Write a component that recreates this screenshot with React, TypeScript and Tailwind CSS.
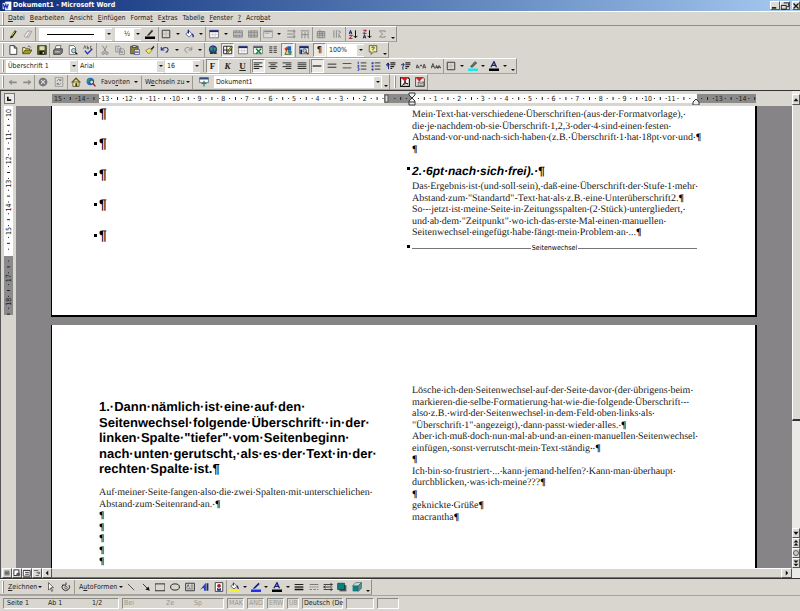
import type { ReactNode } from "react";
import clsx from "clsx";

const NAVY = "#15217a";
const GRAY = "#868686";

/* Toolbar glyphs, all drawn on a 16 x 16 grid */
const icons: Record<string, ReactNode> = {
    pencil: <><path d="M4 12 11 2l3 2-7 10-4 1z" fill="#222" /><path d="m6 11 5-7" stroke="#e8e03a" strokeWidth="1.5" /></>,
    eraser: <path d="m2 11 6-8 6 1-5 9H4zM6 13l5-8" stroke="#777" fill="#eee" />,
    penColor: <><path d="m4 9 7-8 2 2-6 7-4 1z" fill="#333" /><path d="M0 12h16v4H0z" fill="#000" /></>,
    borders: <><path d="M2 2h12v12H2z" stroke="#333" fill="none" strokeWidth="1.5" /><path d="M8 3v10M3 8h10" stroke="#888" strokeDasharray="1 1" /></>,
    bucket: <><path d="m3 8 5-5 5 5-5 5z" fill="#fff" stroke={NAVY} /><path d="M7 1v6M13 8c2 2 2 4 1 5" stroke={NAVY} strokeWidth="2" fill="none" /></>,
    table: <><path d="M1 2h14v12H1z" fill="#fff" stroke="#444" /><path d="M1 2h14v3H1z" fill={NAVY} /><path d="M2 9h12M6 5v9M10 5v9" stroke="#bbb" /></>,
    merge: <><path d="M1 3h14v10H1zM1 6h14M1 10h14M5 3v3M10 3v3M5 10v3M10 10v3" stroke={GRAY} strokeWidth="1.5" fill="#ccc" /></>,
    split: <><path d="M1 3h14v10H1zM1 6h14M1 10h14M5 3v10M10 3v10" stroke={GRAY} strokeWidth="1.5" fill="#ccc" /></>,
    cellAlign: <><path d="M1 2h14v12H1z" stroke={GRAY} fill="#ddd" /><path d="M2 3h12v2H2zM3 7h7v1H3z" fill={GRAY} /></>,
    rowsEven: <path d="M2 3h9M2 8h9M2 13h9M13 1v14M11 5l2-3 2 3M11 11l2 3 2-3" stroke={GRAY} strokeWidth="1.5" fill="none" />,
    colsEven: <path d="M3 5v10M8 5v10M13 5v10M1 3h14M3 9h10" stroke={GRAY} strokeWidth="1.5" fill="none" />,
    autoFormat: <path d="M2 4h12v10H2zM2 7h12M2 10h12M6 4v10M10 4v10M5 1l6 6" stroke={GRAY} strokeWidth="1.5" fill="#ccc" />,
    textDir: <path d="M3 2v12M7 2v12M11 9v5M9 2l5 3-4 3M11 9l3 5" stroke={GRAY} strokeWidth="1.5" fill="none" />,
    sortAZ: <><path d="m2 8 2-6 2 6M3 6h3" stroke={NAVY} strokeWidth="1.6" fill="none" /><path d="M2 10h5l-5 5h5" stroke="#9b1c2c" strokeWidth="1.6" fill="none" /><path d="M12 2v12M9 11l3 3 3-3" stroke="#111" strokeWidth="1.6" fill="none" /></>,
    sortZA: <><path d="M2 2h5L2 7h5" stroke="#9b1c2c" strokeWidth="1.6" fill="none" /><path d="m2 15 2-6 2 6M3 13h3" stroke={NAVY} strokeWidth="1.6" fill="none" /><path d="M12 2v12M9 11l3 3 3-3" stroke="#111" strokeWidth="1.6" fill="none" /></>,
    sigma: <path d="M13 5V3H4l5 5-5 5h9v-2" stroke={GRAY} strokeWidth="1.5" fill="none" />,
    newDoc: <path d="M3 1h7l4 4v10H3zM10 1v4h4" fill="#fff" stroke="#222" strokeWidth="1.3" />,
    open: <><path d="M1 13V4h4l1 2h6v3" fill="#f5ee6a" stroke="#222" /><path d="m1 14 4-6h11l-4 6z" fill="#a89a18" stroke="#222" /><path d="M9 3c2-2 4-1 5 1" stroke="#222" fill="none" /></>,
    save: <><path d="M1 1h14v14H1z" fill="#5d6418" stroke="#111" /><path d="M4 2h8v6H4z" fill="#d8d8d0" /><path d="M4 10h8v5H4z" fill="#111" /><path d="M9 11h2v3H9z" fill="#eee" /></>,
    print: <><path d="M5 1h8l-2 6H3z" fill="#fff" stroke="#333" /><path d="m1 8 3-2h11v6l-3 3H1z" fill="#777" stroke="#222" /><path d="M3 11h8" stroke="#ddd" strokeWidth="1.5" /></>,
    preview: <><path d="M2 1h7l3 3v11H2z" fill="#fff" stroke="#333" /><circle cx="9" cy="9" r="3.5" fill="#9ed8e0" stroke="#333" /><path d="m12 12 3 3" stroke="#111" strokeWidth="2" /></>,
    spell: <><path d="m1 6 2-5 2 5M7 1v5h2V4H7M14 2h-2v4h2" stroke="#333" fill="none" /><path d="m3 9 4 5 8-8" stroke="#2038b0" strokeWidth="2" fill="none" /></>,
    cut: <><path d="m4 1 6 10M11 1 6 11" stroke={GRAY} strokeWidth="1.5" /><circle cx="5" cy="13" r="2" stroke={GRAY} fill="none" strokeWidth="1.5" /><circle cx="11" cy="13" r="2" stroke={GRAY} fill="none" strokeWidth="1.5" /></>,
    copy: <path d="M1 2h6l2 2v7H1zM7 6h5l3 2v7H7zM3 5h3M3 8h3M9 10h4M9 12h4" fill="#ddd" stroke={GRAY} strokeWidth="1.3" />,
    paste: <><path d="M1 2h12v12H1z" fill="#8d8428" stroke="#222" /><path d="M4 1h6v3H4z" fill="#ddd" stroke="#222" /><path d="M7 7h8v8H7z" fill="#fff" stroke={NAVY} /><path d="M8 10h6M8 12h6" stroke={NAVY} /></>,
    brush: <><path d="m1 9 6-4 4 4-5 5z" fill="#f2e85a" stroke="#555" /><path d="m9 6 5-5 1 2-4 5z" fill="#222" /></>,
    undo: <path d="M2 3v5h5M3 7c3-4 9-4 10 0 0 3-1 4-4 5" stroke="#2b3790" strokeWidth="1.8" fill="none" />,
    redo: <path d="M14 3v5H9M13 7C10 3 4 3 3 7c0 3 1 4 4 5" stroke={GRAY} strokeWidth="1.5" fill="none" />,
    link: <><circle cx="8" cy="7" r="6" fill="#1f4fb0" stroke="#123" /><path d="M4 4c3-2 4 1 3 3S4 9 4 7zM9 3l4 3-3 3z" fill="#36a24a" /><path d="M3 13h5M9 13h5" stroke="#333" strokeWidth="3" /></>,
    tablesBar: <><path d="M1 2h13v12H1zM1 8h13M6 2v12" fill="#fff" stroke="#222" strokeWidth="1.5" /><path d="m7 11 6-9 2 1-6 9z" fill="#e8e03a" stroke="#111" /></>,
    excel: <><path d="M1 2h14v12H1z" fill="#fff" stroke="#444" /><path d="M1 2h14v3H1z" fill="#557" /><path d="m5 6 8 8M13 6l-8 8" stroke="#178040" strokeWidth="2.5" /></>,
    columns: <path d="M2 3h5M2 6h5M2 9h5M2 12h5M9 3h5M9 6h5M9 9h5M9 12h5" stroke="#555" strokeWidth="1.8" />,
    drawing: <><path d="m2 6 5-4 3 3-5 5z" fill="#e3352b" /><path d="M8 2h5v6H8z" fill="#1b5fc0" /><path d="m3 15 4-9 6 9z" fill="#f1dc31" stroke="#223" /><circle cx="11" cy="11" r="3" fill="#1c8f93" /></>,
    docMap: <><path d="M1 2h14v12H1z" fill="#fff" stroke="#222" /><path d="M1 2h14v3H1zM2 7h3v7H2z" fill={NAVY} /><circle cx="9" cy="9" r="3" fill="#9ed8e0" stroke="#222" /><path d="m11 11 4 4" stroke="#8a1c1c" strokeWidth="2" /></>,
    help: <><path d="M2 1h12v10H9l-4 4v-4H2z" fill="#f7f08c" stroke="#222" /><path d="M6 5c0-3 5-2 4 0L8 7v1M8 9v1" stroke="#16309a" strokeWidth="1.5" fill="none" /></>,
    alignLeft: <path d="M1 3h14M1 6h9M1 9h14M1 12h9" stroke="#222" strokeWidth="1.6" />,
    alignCenter: <path d="M1 3h14M4 6h8M1 9h14M4 12h8" stroke="#333" strokeWidth="1.6" />,
    alignRight: <path d="M1 3h14M6 6h9M1 9h14M6 12h9" stroke="#333" strokeWidth="1.6" />,
    justify: <path d="M1 3h14M1 6h14M1 9h14M1 12h14" stroke="#333" strokeWidth="1.6" />,
    space1: <path d="M1 8h14" stroke="#222" strokeWidth="2" />,
    space15: <path d="M1 5h14M1 10h14" stroke="#333" strokeWidth="1.6" />,
    space2: <path d="M1 4h14M1 11h14" stroke="#444" strokeWidth="1.4" />,
    numbered: <><path d="M6 3h9M6 8h9M6 13h9" stroke="#333" strokeWidth="1.5" /><path d="M2 1v4M1 7h2v2H1M1 11h2v4H1" stroke="#2038b0" strokeWidth="1.5" fill="none" /></>,
    bullets: <><path d="M6 3h9M6 8h9M6 13h9" stroke="#333" strokeWidth="1.5" /><path d="M1 2h3v3H1zM1 7h3v3H1zM1 12h3v3H1z" fill="#2038b0" /></>,
    outdent: <><path d="M7 3h8M7 6h8M7 9h6M7 12h3" stroke="#222" strokeWidth="1.7" /><path d="M1 6h5M3 3 1 6l2 3M4 3v10" stroke={NAVY} strokeWidth="1.5" fill="none" /></>,
    indent: <><path d="M7 3h8M7 6h8M7 9h6M7 12h3" stroke="#222" strokeWidth="1.7" /><path d="M0 6h5M3 3l2 3-2 3M3 9v5" stroke={NAVY} strokeWidth="1.5" fill="none" /></>,
    grow: <path d="m0 12 2-6 3 6M1 10h3M6 9l2-3 2 3M11 12l2-7 3 7M12 10h3" stroke="#333" strokeWidth="1.3" fill="none" />,
    shrink: <path d="m0 12 3-8 3 8M1 9h4M7 12l2-5 2 5M11 12l2-5 3 5M8 10h7" stroke="#333" strokeWidth="1.3" fill="none" />,
    marker: <><path d="m4 9 7-8 3 2-7 7z" fill="#5b7d58" stroke="#234" /><path d="M0 12h16v4H0z" fill="#18e8e8" /></>,
    fontColor: <><path d="m3 10 5-9 4 9M5 7h6" stroke={NAVY} strokeWidth="2" fill="none" /><path d="M0 12h16v4H0z" fill="#000" /></>,
    back: <path d="M1 8l5-4v3h8v3H6v3z" fill="#8c8c8c" />,
    forward: <path d="m15 8-5-4v3H2v3h8v3z" fill="#8c8c8c" />,
    stop: <><circle cx="8" cy="8" r="7" fill="#777" /><path d="m5 5 6 6M11 5l-6 6" stroke="#ddd" strokeWidth="1.8" /></>,
    refresh: <><path d="M2 1h12v14H2z" fill="#e4e3df" stroke="#777" /><path d="M5 7c0-4 5-4 6-1M11 9c0 4-5 4-6 1M11 3v3H8M5 13v-3h3" stroke="#777" strokeWidth="1.5" fill="none" /></>,
    home: <><path d="M3 8h10v7H3z" fill="#fff27a" stroke="#222" /><path d="m1 9 7-7 7 7" stroke="#6b5a12" strokeWidth="2" fill="none" /><path d="M7 10h3v5H7z" fill="#333" /></>,
    search: <><circle cx="7" cy="7" r="6" fill="#2668c8" /><path d="M3 3c4-2 4 2 3 4s-4 2-4 0zM9 2l4 5H9z" fill="#2aa05a" /><circle cx="9" cy="8" r="3" fill="#bdf0f4" stroke="#123" /><path d="m11 10 4 5" stroke="#b52222" strokeWidth="2.5" /></>,
    webBar: <><path d="M1 1h14v8H1z" fill="#fff" stroke="#444" /><path d="M1 1h14v3H1z" fill="#334a80" /><path d="M8 6v9M4 10h8" stroke="#128a8a" strokeWidth="2" /></>,
    pdf: <><path d="M1 1h12l2 2v12H1z" fill="#fff" stroke="#111" strokeWidth="1.8" /><path d="M0 0h14L8 7z" fill="#e01b1b" /><path d="M4 13c3-2 4-5 4-7 0 3 2 5 5 5-4-1-6 0-9 2" stroke="#111" fill="none" strokeWidth="1.5" /></>,
    pdfMail: <><path d="M1 1h12l2 2v12H1z" fill="#eee" stroke="#444" strokeWidth="1.5" /><path d="M0 0h14L7 7z" fill="#e01b1b" /><path d="M5 8h9v6H5zM5 8l5 3 4-3" stroke="#444" fill="#ccc" /></>,
    pointer: <path d="m4 1 8 8H8l3 5-2 1-2-5-3 3z" fill="#fff" stroke="#222" />,
    rotate: <><path d="M3 4a6 6 0 1 0 10 1M8 1v4h-5" stroke="#333" strokeWidth="1.6" fill="none" /><circle cx="8" cy="9" r="2" fill="none" stroke="#333" /></>,
    line: <path d="m3 3 10 10" stroke="#333" strokeWidth="1.3" />,
    arrow: <><path d="m3 3 8 8" stroke="#222" strokeWidth="1.4" /><path d="m14 14-7-2 5-5z" fill="#111" /></>,
    rect: <path d="M0 3h16v11H0z" stroke="#222" strokeWidth="1.5" fill="none" />,
    ellipse: <ellipse cx="8" cy="8" rx="7" ry="5" stroke="#222" strokeWidth="1.5" fill="none" />,
    textBox: <><path d="M1 2h14v12H1z" fill="#ddd" stroke="#333" strokeWidth="1.5" /><path d="m3 9 2-5 2 5M9 5h4M9 8h4M3 11h10" stroke="#333" fill="none" /></>,
    wordArt: <><path d="M1 13 11 1v13H8v-4H5z" fill="#2345bd" /><path d="M12 2h3v12h-3z" fill="#1b2a70" /></>,
    clipArt: <><path d="M2 1h12v14H2z" fill="#fff" stroke="#222" strokeWidth="1.3" /><circle cx="8" cy="6" r="3" fill="#a3201c" /><path d="M5 14V9l3 2 3-2v5z" fill="#222a6a" /></>,
    fillColor: <><path d="m3 7 5-5 5 5-5 4z" fill="#fff" stroke="#223" /><path d="M7 1v5" stroke="#223" strokeWidth="1.5" /><path d="m13 6 2 5" stroke={NAVY} strokeWidth="2" /><path d="M0 12h16v4H0z" fill="#f5f518" /></>,
    lineColor: <><path d="m4 9 8-8 2 2-7 7-4 1z" fill={NAVY} /><path d="M0 12h16v4H0z" fill="#2030f0" /></>,
    lineStyle: <><path d="M1 4h14" stroke="#111" strokeWidth="1.5" /><path d="M1 8h14" stroke="#111" strokeWidth="2" /><path d="M1 12h14" stroke="#111" strokeWidth="2.5" /></>,
    dashStyle: <><path d="M1 4h14" stroke="#666" strokeWidth="1.3" /><path d="M1 8h14" stroke="#666" strokeDasharray="2 1" strokeWidth="1.3" /><path d="M1 12h14" stroke="#666" strokeDasharray="4 2" strokeWidth="1.3" /></>,
    arrowStyle: <path d="M1 4h14M12 2l3 2-3 2M1 8h14M4 6 1 8l3 2M1 12h14M12 10l3 2-3 2" stroke="#222" strokeWidth="1.3" fill="none" />,
    shadow: <><path d="M4 5h11v10H4z" fill="#555" /><path d="M1 2h11v10H1z" fill="#0a8080" stroke="#033" /></>,
    cube: <><path d="M1 6h9v9H1z" fill="#0a8080" /><path d="m1 6 5-5h9l-5 5z" fill="#c8dedd" stroke="#355" /><path d="m10 6 5-5v9l-5 5z" fill="#4f9494" stroke="#355" /></>,
    viewNormal: <path d="M4 5h8M4 7h8M4 9h8M4 11h8" stroke="#333" strokeWidth="1.2" />,
    viewWeb: <><path d="M3 3h8v9H3z" fill="#fff" stroke="#333" strokeWidth="1.5" /><circle cx="10" cy="10" r="3" fill="#556" /></>,
    viewPage: <path d="M2 4h11v9H2zM5 7h6M5 10h6" fill="#fff" stroke="#333" strokeWidth="1.5" />,
    viewOutline: <path d="M3 4h7M7 7h6M9 9h4M6 12h5" stroke="#555" strokeWidth="1.3" />,
    up: <path d="m8 5 4 5H4z" fill="#111" />,
    down: <path d="m8 11 4-5H4z" fill="#111" />,
    left: <path d="m6 8 4-4v8z" fill="#111" />,
    right: <path d="m10 8-4-4v8z" fill="#111" />,
    pagePrev: <path d="m8 3 4 4H4zM8 8l4 4H4z" fill="#111" />,
    pageNext: <path d="m8 13 4-4H4zM8 8l4-4H4z" fill="#111" />,
    browse: <circle cx="8" cy="8" r="4" stroke="#555" strokeWidth="1.5" fill="#ccc" />,
    minimize: <path d="M3 11h7" stroke="#111" strokeWidth="2.5" />,
    restore: <path d="M6 3h8v6h-3M2 7h8v6H2z" stroke="#111" strokeWidth="1.5" fill="none" />,
    close: <path d="m4 4 8 8M12 4l-8 8" stroke="#111" strokeWidth="2" />,
};

function Icon({ name }: { name: string }) {
    return (
        <svg viewBox="0 0 16 16" className="size-[10px] shrink-0" aria-hidden="true">
            {icons[name]}
        </svg>
    );
}

function Tool({ name, label, pressed, children }: { name?: string; label: string; pressed?: boolean; children?: ReactNode }) {
    return (
        <button
            aria-label={label}
            aria-pressed={pressed}
            className={clsx(
                "flex h-[14px] w-[13px] shrink-0 items-center justify-center",
                pressed && "border border-t-[#8a8984] border-l-[#8a8984] border-r-white border-b-white bg-[#eceae7]",
            )}
        >
            {name ? <Icon name={name} /> : children}
        </button>
    );
}

function Caret() {
    return (
        <svg viewBox="0 0 4 2" className="h-[2px] w-[4px] shrink-0" aria-hidden="true">
            <path d="M0 0h4L2 2z" fill="#111" />
        </svg>
    );
}

function CaretButton({ label }: { label: string }) {
    return (
        <button aria-label={label} className="flex h-[14px] w-[7px] shrink-0 items-center justify-center">
            <Caret />
        </button>
    );
}

function Group({ className, last, children }: { className: string; last?: boolean; children: ReactNode }) {
    return (
        <div className={clsx("flex h-[14px] shrink-0 items-center justify-around", !last && "border-r border-[#9a9994]", className)}>
            {children}
        </div>
    );
}

function Grip() {
    return <div className="mr-[2px] ml-[2px] h-[12px] w-[2px] shrink-0 border-r border-l border-r-[#8f8e89] border-l-white" />;
}

function Overflow() {
    return (
        <button aria-label="Weitere Schaltflächen" className="flex h-[14px] w-[7px] shrink-0 items-end justify-center pb-[2px]">
            <Caret />
        </button>
    );
}

function Bar({ className, children }: { className?: string; children: ReactNode }) {
    return (
        <div className={clsx("flex h-[16px] w-fit items-center border-t border-r border-b border-t-white border-r-[#8f8e89] border-b-[#a5a49f]", className)}>
            {children}
        </div>
    );
}

function Combo({ label, value, className, children }: { label: string; value: string; className: string; children?: ReactNode }) {
    return (
        <div className={clsx("relative mr-px flex h-[13px] shrink-0 items-center bg-white", className)}>
            <select aria-label={label} className="h-[13px] min-w-0 flex-1 appearance-none pl-[2px] leading-[12px]">
                <option>{value}</option>
            </select>
            {children}
            <span className="pointer-events-none flex h-[11px] w-[7px] items-center justify-center bg-[#dddbd6]"><Caret /></span>
        </div>
    );
}

/* The letter at the given index is the underlined keyboard shortcut */
function Access({ text, at }: { text: string; at: number }) {
    return <>{text.slice(0, at)}<u>{text[at]}</u>{text.slice(at + 1)}</>;
}

function TextButton({ text, at, className }: { text: string; at: number; className: string }) {
    return (
        <button className={clsx("flex h-[14px] shrink-0 items-center justify-between", className)}>
            <span className="whitespace-nowrap"><Access text={text} at={at} /></span>
            <Caret />
        </button>
    );
}

const menus: [string, number][] = [
    ["Datei", 0], ["Bearbeiten", 0], ["Ansicht", 0], ["Einfügen", 0], ["Format", 5],
    ["Extras", 1], ["Tabelle", 6], ["Fenster", 0], ["?", 0], ["Acrobat", 4],
];

const CM = 23.6;

function HorizontalRuler() {
    const zero = 360;
    const marks = Array.from({ length: 30 }, (_, i) => i - 15);
    return (
        <svg className="h-[9px] w-[704px] shrink-0 bg-[#fdfdfd]" aria-hidden="true">
            <rect x="0" y="0" width="47" height="9" fill="#8a8a8a" />
            <rect x="332" y="0" width="28" height="9" fill="#8a8a8a" />
            <rect x="333" y="1" width="3" height="7" fill="#ddd" stroke="#555" />
            <rect x="645" y="0" width="59" height="9" fill="#8a8a8a" />
            {marks.map((n) => (
                <g key={n} fill="#222">
                    {n !== 0 && n !== -1 && n !== 12 && (
                        <text x={zero + n * CM} y="7" fontSize="7" textAnchor="middle">{Math.abs(n)}</text>
                    )}
                    <rect x={zero + (n + 0.25) * CM} y="4" width="1" height="1" />
                    <rect x={zero + (n + 0.5) * CM} y="3" width="1" height="3" />
                    <rect x={zero + (n + 0.75) * CM} y="4" width="1" height="1" />
                </g>
            ))}
        </svg>
    );
}

function VerticalRuler() {
    const marks = [10, 11, 12, 13, 14, 15, 16, 17, 18];
    return (
        <svg className="h-[209px] w-[9px] bg-white" aria-hidden="true">
            <rect x="0" y="150" width="9" height="59" fill="#8a8a8a" />
            {marks.map((n, i) => {
                const y = 7 + i * CM;
                return (
                    <g key={n} fill="#222">
                        {n !== 16 && <text x="0" y="0" fontSize="7" textAnchor="middle" transform={`translate(7 ${y}) rotate(-90)`}>{n}</text>}
                        <rect x="4" y={y + CM / 4} width="1" height="1" />
                        <rect x="3" y={y + CM / 2} width="3" height="1" />
                        <rect x="4" y={y + (CM * 3) / 4} width="1" height="1" />
                    </g>
                );
            })}
        </svg>
    );
}

/* Formatting marks stand out darker than the running text; a dot takes about the width of the space it stands for */
function Marks({ text }: { text: string }) {
    return (
        <>
            {text.split(/([·¶]+)/).map((part, i) => (
                i % 2 ? <b key={i} className={clsx("leading-none text-black", part[0] === "·" && "text-[8px]")}>{part}</b> : part
            ))}
        </>
    );
}

/* A dot run may end in a pilcrow, which keeps the size of the text */
function Line({ text }: { text: string }) {
    const end = text.endsWith("¶");
    return <p><Marks text={end ? text.slice(0, -1) : text} />{end && <b className="leading-none text-black">¶</b>}</p>;
}

function Lines({ lines, className }: { lines: string[]; className?: string }) {
    return (
        <div className={clsx("grid auto-rows-[12px_11px] font-['Liberation_Serif',serif] text-[10px] leading-[12px] whitespace-nowrap text-[#222]", className)}>
            {lines.map((line, i) => <Line key={i} text={line} />)}
        </div>
    );
}

const intro = [
    "Mein·Text·hat·verschiedene·Überschriften·(aus·der·Formatvorlage),·",
    "die·je·nachdem·ob·sie·Überschrift·1,2,3·oder·4·sind·einen·festen·",
    "Abstand·vor·und·nach·sich·haben·(z.B.·Überschrift·1·hat·18pt·vor·und·¶",
    "¶",
];

const result = [
    "Das·Ergebnis·ist·(und·soll·sein),·daß·eine·Überschrift·der·Stufe·1·mehr·",
    "Abstand·zum·\"Standartd\"-Text·hat·als·z.B.·eine·Unterüberschrift2.¶",
    "So·-·jetzt·ist·meine·Seite·in·Zeitungsspalten·(2·Stück)·untergliedert,·",
    "und·ab·dem·\"Zeitpunkt\"·wo·ich·das·erste·Mal·einen·manuellen·",
    "Seitenwechsel·eingefügt·habe·fängt·mein·Problem·an·...¶",
];

const heading = [
    "1.·Dann·nämlich·ist·eine·auf·den·",
    "Seitenwechsel·folgende·Überschrift··in·der·",
    "linken·Spalte·\"tiefer\"·vom·Seitenbeginn·",
    "nach·unten·gerutscht,·als·es·der·Text·in·der·",
    "rechten·Spalte·ist.¶",
];

const leftText = [
    "Auf·meiner·Seite·fangen·also·die·zwei·Spalten·mit·unterschielichen·",
    "Abstand·zum·Seitenrand·an.·¶",
    "¶", "¶", "¶", "¶", "¶",
];

const rightText = [
    "Lösche·ich·den·Seitenwechsel·auf·der·Seite·davor·(der·übrigens·beim·",
    "markieren·die·selbe·Formatierung·hat·wie·die·folgende·Überschrift·-·",
    "also·z.B.·wird·der·Seitenwechsel·in·dem·Feld·oben·links·als·",
    "\"Überschrift·1\"·angezeigt),·dann·passt·wieder·alles.·¶",
    "Aber·ich·muß·doch·nun·mal·ab·und·an·einen·manuellen·Seitenwechsel·",
    "einfügen,·sonst·verrutscht·mein·Text·ständig··¶",
    "¶",
    "Ich·bin·so·frustriert·...·kann·jemand·helfen?·Kann·man·überhaupt·",
    "durchblicken,·was·ich·meine???¶",
    "¶",
    "geknickte·Grüße¶",
    "macrantha¶",
];

function Document() {
    return (
        <main className="flex min-w-0 flex-1 flex-col gap-[8px] overflow-hidden bg-[#868486] pr-[35px] pl-[35px] text-black [text-rendering:geometricPrecision]">
            <section className="flex border-r-2 border-b-2 border-l border-black bg-white pb-[57px]">
                <div className="grid w-[353px] shrink-0 auto-rows-[30px_31px] content-start pl-[42px] font-['Liberation_Sans',sans-serif] text-[14px] leading-[14px] font-bold">
                    {[1, 2, 3, 4, 5].map((n) => (
                        <p key={n} className="flex h-[14px] items-center gap-[2px]"><span className="size-[3px] bg-black" />¶</p>
                    ))}
                </div>
                <div className="w-[292px] pt-[3px] pl-[2px]">
                    <Lines lines={intro} className="pl-[5px]" />
                    <h2 className="mt-[8px] flex h-[16px] gap-[2px] font-['Liberation_Sans',sans-serif] text-[12px] leading-[16px] font-bold whitespace-nowrap italic">
                        <span className="mt-[4px] size-[3px] bg-black" />2.·6pt·nach·sich·frei).·¶
                    </h2>
                    <Lines lines={result} className="mt-[2px] pl-[5px]" />
                    <div className="mt-[4px] flex h-[10px] items-center gap-px text-[7px]">
                        <span className="mr-px mb-[4px] size-[3px] bg-black" />
                        <span className="h-px flex-1 bg-[#777]" />
                        Seitenwechsel
                        <span className="h-px flex-1 bg-[#777]" />
                    </div>
                </div>
            </section>
            <section className="flex flex-1 border-r-2 border-l border-black bg-white">
                <div className="w-[349px] shrink-0 pt-[74px] pl-[47px]">
                    <h1 className="grid auto-rows-[16px_15px] font-['Liberation_Sans',sans-serif] text-[13px] leading-[16px] font-bold whitespace-nowrap">
                        {heading.map((line) => <span key={line}>{line}</span>)}
                    </h1>
                    <Lines lines={leftText} className="mt-[10px]" />
                </div>
                <Lines lines={rightText} className="content-start pt-[60px] pl-[11px]" />
            </section>
        </main>
    );
}

const raised = "flex shrink-0 items-center justify-center border border-t-white border-l-white border-r-[#555] border-b-[#555] bg-[#dddbd6]";
const sunken = "flex h-[11px] shrink-0 items-center border border-t-[#8a8984] border-l-[#8a8984] border-r-white border-b-white pl-px whitespace-nowrap";

function Toolbars() {
    return (
        <div className="shrink-0 border-b border-[#333]">
            <Bar>
                <Grip />
                <Group className="w-[30px]"><Tool name="pencil" label="Tabelle zeichnen" /><Tool name="eraser" label="Radierer" /></Group>
                <Combo label="Linienart" value="" className="ml-[3px] w-[73px]">
                    <span className="pointer-events-none absolute inset-x-[8px] top-[6px] mr-[10px] h-px bg-black" />
                </Combo>
                <Combo label="Linienstärke" value="½" className="ml-[2px] w-[26px] pl-[7px]" />
                <Group className="w-[17px]"><Tool name="penColor" label="Rahmenfarbe" /></Group>
                <Group className="w-[47px]"><Tool name="borders" label="Rahmen" /><CaretButton label="Rahmenauswahl" /><Tool name="bucket" label="Schattierung" /><CaretButton label="Schattierungsfarbe" /></Group>
                <Group className="w-[55px]"><Tool name="table" label="Tabelle einfügen" /><CaretButton label="Tabellenoptionen" /><Tool name="merge" label="Zellen verbinden" /><Tool name="split" label="Zellen teilen" /></Group>
                <Group className="w-[52px]"><Tool name="cellAlign" label="Ausrichtung" /><CaretButton label="Ausrichtung wählen" /><Tool name="rowsEven" label="Zeilen verteilen" /><Tool name="colsEven" label="Spalten verteilen" /></Group>
                <Group className="w-[33px]"><Tool name="autoFormat" label="AutoFormat" /><Tool name="textDir" label="Textrichtung" /></Group>
                <Group className="w-[43px]" last><Tool name="sortAZ" label="Aufsteigend sortieren" /><Tool name="sortZA" label="Absteigend sortieren" /><Tool name="sigma" label="AutoSumme" /></Group>
                <Overflow />
            </Bar>
            <Bar>
                <Grip />
                <Group className="w-[44px]"><Tool name="newDoc" label="Neu" /><Tool name="open" label="Öffnen" /><Tool name="save" label="Speichern" /></Group>
                <Group className="w-[47px]"><Tool name="print" label="Drucken" /><Tool name="preview" label="Seitenansicht" /><Tool name="spell" label="Rechtschreibung" /></Group>
                <Group className="w-[61px]"><Tool name="cut" label="Ausschneiden" /><Tool name="copy" label="Kopieren" /><Tool name="paste" label="Einfügen" /><Tool name="brush" label="Format übertragen" /></Group>
                <Group className="w-[47px]"><Tool name="undo" label="Rückgängig" /><CaretButton label="Rückgängigliste" /><Tool name="redo" label="Wiederholen" /><CaretButton label="Wiederholliste" /></Group>
                <Group className="w-[91px]">
                    <Tool name="link" label="Hyperlink" />
                    <Tool name="tablesBar" label="Tabellen und Rahmen" pressed />
                    <Tool name="table" label="Tabelle" />
                    <Tool name="excel" label="Excel-Tabelle" />
                    <Tool name="columns" label="Spalten" />
                    <Tool name="drawing" label="Zeichnen" pressed />
                </Group>
                <Group className="w-[31px]" last><Tool name="docMap" label="Dokumentstruktur" /><Tool label="Formatierungszeichen" pressed><b className="text-[9px]">¶</b></Tool></Group>
                <Combo label="Zoom" value="100%" className="w-[37px]" />
                <Group className="w-[16px]" last><Tool name="help" label="Hilfe" /></Group>
                <Overflow />
            </Bar>
            <Bar>
                <Grip />
                <Combo label="Formatvorlage" value="Überschrift 1" className="w-[71px]" />
                <Combo label="Schriftart" value="Arial" className="w-[86px]" />
                <Combo label="Schriftgrad" value="16" className="w-[35px]" />
                <div className="ml-[2px] h-[12px] w-[2px] border-l border-[#9a9994]" />
                <Group className="w-[46px] font-['Liberation_Serif',serif] text-[9px] font-bold">
                    <Tool label="Fett" pressed>F</Tool>
                    <Tool label="Kursiv"><i>K</i></Tool>
                    <Tool label="Unterstrichen"><u>U</u></Tool>
                </Group>
                <Group className="w-[59px]"><Tool name="alignLeft" label="Linksbündig" pressed /><Tool name="alignCenter" label="Zentriert" /><Tool name="alignRight" label="Rechtsbündig" /><Tool name="justify" label="Blocksatz" /></Group>
                <Group className="w-[134px]">
                    <Tool name="space1" label="Zeilenabstand 1" pressed />
                    <Tool name="space15" label="Zeilenabstand 1,5" />
                    <Tool name="space2" label="Zeilenabstand 2" />
                    <Tool name="numbered" label="Nummerierung" />
                    <Tool name="bullets" label="Aufzählung" />
                    <Tool name="outdent" label="Einzug verkleinern" />
                    <Tool name="indent" label="Einzug vergrößern" />
                    <Tool name="grow" label="Schrift vergrößern" />
                    <Tool name="shrink" label="Schrift verkleinern" />
                </Group>
                <Group className="w-[65px]" last>
                    <Tool name="borders" label="Rahmenlinien" /><CaretButton label="Rahmenlinien wählen" />
                    <Tool name="marker" label="Hervorheben" /><CaretButton label="Hervorhebungsfarbe" />
                    <Tool name="fontColor" label="Schriftfarbe" /><CaretButton label="Schriftfarbe wählen" />
                </Group>
                <Overflow />
            </Bar>
            <div className="flex">
                <Bar>
                    <Grip />
                    <Group className="w-[29px]"><Tool name="back" label="Zurück" /><Tool name="forward" label="Vorwärts" /></Group>
                    <Group className="w-[33px]"><Tool name="stop" label="Abbrechen" /><Tool name="refresh" label="Aktualisieren" /></Group>
                    <Group className="w-[31px]" last><Tool name="home" label="Startseite" /><Tool name="search" label="Im Web suchen" /></Group>
                    <TextButton text="Favoriten" at={4} className="ml-[2px] w-[37px]" />
                    <div className="mx-[3px] h-[13px] w-px bg-[#9a9994]" />
                    <TextButton text="Wechseln zu" at={1} className="w-[45px]" />
                    <div className="ml-[2px] h-[13px] w-px bg-[#9a9994]" />
                    <Group className="w-[21px]" last><Tool name="webBar" label="Nur Websymbolleiste" /></Group>
                    <div className="flex h-[12px] w-[168px] items-center bg-white pr-px">
                        <input aria-label="Adresse" defaultValue="Dokument1" className="h-[12px] min-w-0 flex-1 pl-[2px]" />
                        <span className="flex h-[11px] w-[7px] items-center justify-center bg-[#dddbd6]"><Caret /></span>
                    </div>
                    <Overflow />
                </Bar>
                <Bar className="pl-[2px]">
                    <Grip />
                    <Group className="w-[29px]" last><Tool name="pdf" label="PDF erstellen" /><Tool name="pdfMail" label="PDF senden" /></Group>
                </Bar>
            </div>
        </div>
    );
}

function DrawingBar() {
    return (
        <div className="shrink-0 border-t border-b border-t-[#333] border-b-[#a5a49f]">
            <Bar>
                <Grip />
                <TextButton text="Zeichnen" at={0} className="ml-[2px] w-[34px]" />
                <Group className="ml-px w-[32px]"><Tool name="pointer" label="Objekte markieren" /><Tool name="rotate" label="Freies Drehen" /></Group>
                <TextButton text="AutoFormen" at={1} className="ml-[4px] w-[44px]" />
                <Group className="ml-px w-[103px]">
                    <Tool name="line" label="Linie" />
                    <Tool name="arrow" label="Pfeil" />
                    <Tool name="rect" label="Rechteck" />
                    <Tool name="ellipse" label="Ellipse" />
                    <Tool name="textBox" label="Textfeld" />
                    <Tool name="wordArt" label="WordArt" />
                    <Tool name="clipArt" label="ClipArt" />
                </Group>
                <Group className="w-[65px]" last>
                    <Tool name="fillColor" label="Füllfarbe" /><CaretButton label="Füllfarbe wählen" />
                    <Tool name="lineColor" label="Linienfarbe" /><CaretButton label="Linienfarbe wählen" />
                    <Tool name="fontColor" label="Textfarbe" /><CaretButton label="Textfarbe wählen" />
                </Group>
                <Group className="w-[72px]" last>
                    <Tool name="lineStyle" label="Linienart" />
                    <Tool name="dashStyle" label="Strichart" />
                    <Tool name="arrowStyle" label="Pfeilart" />
                    <Tool name="shadow" label="Schatten" />
                    <Tool name="cube" label="3D" />
                </Group>
                <Overflow />
            </Bar>
        </div>
    );
}

function StatusBar() {
    return (
        <footer className="mb-[2px] flex h-[15px] shrink-0 items-center gap-[3px] pl-[3px]">
            <div className={clsx(sunken, "w-[116px]")}>
                <span className="w-[43px] pl-[2px]">Seite 1</span><span className="w-[44px]">Ab 1</span><span>1/2</span>
            </div>
            <div className={clsx(sunken, "w-[102px] text-[#999893]")}>
                <span className="w-[42px]">Bei</span><span className="w-[28px]">Ze</span><span>Sp</span>
            </div>
            <div className={clsx(sunken, "w-[17px] text-[#999893]")}>MAK</div>
            <div className={clsx(sunken, "w-[17px] text-[#999893]")}>ÄND</div>
            <div className={clsx(sunken, "w-[17px] text-[#999893]")}>ERW</div>
            <div className={clsx(sunken, "w-[12px] text-[#999893]")}>ÜB</div>
            <div className={clsx(sunken, "w-[41px]")}>Deutsch (De</div>
            <div className={clsx(sunken, "w-[28px]")} />
            <div className={clsx(sunken, "w-[22px]")} />
        </footer>
    );
}

export default function App() {
    return (
        <div className="flex min-h-screen flex-col overflow-hidden bg-[#d8d6cf] font-['DejaVu_Sans_Condensed','DejaVu_Sans',sans-serif] text-[7px] leading-[9px] text-[#222]">
            <header className="flex h-[11px] shrink-0 items-center bg-linear-to-r from-[#0f2c78] to-[#a6caf0] pl-[2px] text-white">
                <svg viewBox="0 0 16 16" className="size-[10px]" aria-hidden="true">
                    <path d="M5 1h10v14H5z" fill="#fff" />
                    <path d="M1 3h10v10H1z" fill="#dfe6f8" />
                    <path d="m2 5 2 6 2-5 2 5 2-6" stroke="#2038b0" strokeWidth="2" fill="none" />
                </svg>
                <h1 className="flex-1 pl-px font-bold">Dokument1 - Microsoft Word</h1>
                <button aria-label="Minimieren" className={clsx(raised, "h-[9px] w-[10px]")}><Icon name="minimize" /></button>
                <button aria-label="Wiederherstellen" className={clsx(raised, "mr-[2px] h-[9px] w-[10px]")}><Icon name="restore" /></button>
                <button aria-label="Schließen" className={clsx(raised, "h-[9px] w-[8px]")}><Icon name="close" /></button>
            </header>
            <nav className="flex h-[15px] shrink-0 items-center border-t border-b border-t-white border-b-[#8f8e89]">
                <Grip />
                <div className="flex gap-[5px] pl-[2px]">
                    {menus.map(([text, at]) => <button key={text}><Access text={text} at={at} /></button>)}
                </div>
            </nav>
            <Toolbars />
            <div className="flex flex-1">
                <div className="flex min-w-0 flex-1 flex-col border-l border-[#555]">
                    <div className="relative flex h-[15px] shrink-0 items-center gap-[37px] pl-[3px]">
                        <button aria-label="Tabulator" className="flex size-[11px] items-center justify-center border border-[#777] bg-[#eceae7]">
                            <svg viewBox="0 0 6 6" className="size-[5px]" aria-hidden="true"><path d="M1 1v4h4" stroke="#111" strokeWidth="2" fill="none" /></svg>
                        </button>
                        <HorizontalRuler />
                        <svg viewBox="0 0 8 14" className="absolute top-[1px] left-[407px] h-[14px] w-[8px]" aria-hidden="true">
                            <path d="M1 1h6v2L4 6l3 3v4H1V9l3-3-3-3zM1 10h6" fill="#eee" stroke="#333" />
                        </svg>
                        <svg viewBox="0 0 8 6" className="absolute bottom-[1px] left-[691px] h-[6px] w-[8px]" aria-hidden="true">
                            <path d="m4 0 3 3v3H1V3z" fill="#eee" stroke="#333" />
                        </svg>
                    </div>
                    <div className="flex flex-1">
                        <div className="w-[15px] shrink-0 pl-[3px]"><VerticalRuler /></div>
                        <Document />
                    </div>
                    <div className="flex h-[10px] shrink-0 pl-px">
                        {["viewNormal", "viewWeb", "viewPage", "viewOutline", "left"].map((name) => (
                            <button key={name} aria-label={name} className={clsx(raised, "h-[10px] w-[10px]")}><Icon name={name} /></button>
                        ))}
                        <div className="flex-1 border-t border-b border-t-white border-b-[#777]" />
                        <button aria-label="Nach rechts" className={clsx(raised, "h-[10px] w-[11px]")}><Icon name="right" /></button>
                    </div>
                </div>
                <div className="flex w-[8px] shrink-0 flex-col bg-[#eceae6] pt-[3px] pb-[10px]">
                    <button aria-label="Nach oben" className={clsx(raised, "h-[11px] w-[8px]")}><Icon name="up" /></button>
                    <div className="flex flex-1 flex-col">
                        <div className="flex-[313] border-b-2 border-l border-b-[#333] border-l-white bg-[#dbd9d3]" />
                        <div className="flex-[107]" />
                    </div>
                    {["down", "pagePrev", "browse", "pageNext"].map((name) => (
                        <button key={name} aria-label={name} className={clsx(raised, "h-[10px] w-[8px]")}><Icon name={name} /></button>
                    ))}
                </div>
            </div>
            <DrawingBar />
            <StatusBar />
        </div>
    );
}
